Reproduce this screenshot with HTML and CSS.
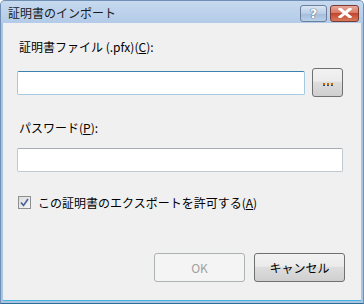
FILE: index.html
```html
<!DOCTYPE html>
<html lang="ja">
<head>
    <meta charset="UTF-8">
    <title>証明書のインポート</title>
    <link rel="stylesheet" href="styles.css">
</head>
<body>
    <div class="window">
        <div class="titlebar">
            <span class="title">証明書のインポート</span>
            <div class="caption-buttons">
                <button class="cap-btn help">?</button>
                <button class="cap-btn close">
                    <svg width="14" height="10" viewBox="0 0 14 10">
                        <path d="M2 1 L12 9 M12 1 L2 9" stroke="#fff" stroke-width="3" stroke-linecap="square"/>
                    </svg>
                </button>
            </div>
        </div>
        <div class="content">
            <label class="field-label" for="pfx">証明書ファイル (.pfx)(<u>C</u>):</label>
            <div class="file-row">
                <input type="text" id="pfx" class="text-input focused">
                <button class="browse-btn"><span class="dots"><i></i><i></i><i></i></span></button>
            </div>
            <label class="field-label pw-label" for="pw">パスワード(<u>P</u>):</label>
            <input type="password" id="pw" class="text-input">
            <label class="check-row">
                <span class="checkbox">
                    <svg width="9" height="9" viewBox="0 0 9 9">
                        <path d="M1 4.5 L3.5 7.5 L8 1" fill="none" stroke="#4a5e9a" stroke-width="1.6"/>
                    </svg>
                </span>
                <span>この証明書のエクスポートを許可する(<u>A</u>)</span>
            </label>
            <div class="actions">
                <button class="btn disabled">OK</button>
                <button class="btn">キャンセル</button>
            </div>
        </div>
    </div>
</body>
</html>
```

FILE: styles.css
```css
body {
    margin: 0;
    font-family: "Noto Sans CJK JP", "Noto Sans", sans-serif;
    font-size: 12px;
    color: #000;
}

.window {
    width: 364px;
    height: 304px;
    box-sizing: border-box;
    display: flex;
    flex-direction: column;
    background: #a9c4e2;
    border-left: 1px solid #6f8fb5;
    border-right: 1px solid #6f8fb5;
    border-top: 1px solid #6f8fb5;
    border-bottom: 1px solid #2e6e96;
    border-radius: 5px 5px 0 0;
    overflow: hidden;
}

.titlebar {
    height: 22px;
    display: flex;
    align-items: center;
    justify-content: space-between;
    padding: 0 4px 0 7px;
    background: linear-gradient(to bottom, #c6d9ef, #b3cbe8);
}

.title {
    font-size: 12px;
    color: #1a1a1a;
    padding-top: 1px;
}

.caption-buttons {
    display: flex;
    gap: 3px;
    padding-top: 2px;
}

.cap-btn {
    height: 17px;
    border-radius: 3px;
    padding: 0;
    display: flex;
    align-items: center;
    justify-content: center;
    font-family: "DejaVu Sans", sans-serif;
}

.cap-btn.help {
    width: 27px;
    border: 1px solid #6d7f9a;
    background: linear-gradient(to bottom, #d9e6f4 0%, #b8cde5 50%, #a3bcda 51%, #b9d0ea 100%);
    color: #fff;
    font-size: 13px;
    font-weight: bold;
    text-shadow: 0 0 1px #3d4f6a, 0 0 1px #3d4f6a;
}

.cap-btn.close {
    width: 29px;
    border: 1px solid #7b3a30;
    background: linear-gradient(to bottom, #e9a99c 0%, #d67b67 45%, #c4452f 50%, #d87a5b 100%);
}

.content {
    flex: 1;
    background: #f0f0f0;
    margin: 0 2px 2px 2px;
    border-bottom: 1px solid #41b5e0;
    padding: 16px 18px 0 14px;
    display: flex;
    flex-direction: column;
}

.field-label {
    display: block;
    padding-left: 2px;
    height: 16px;
    line-height: 16px;
}

.field-label u,
.check-row u {
    text-decoration-thickness: 1px;
    text-underline-offset: 1px;
}

.file-row {
    display: flex;
    align-items: center;
    gap: 7px;
    margin-top: 13px;
}

.text-input {
    height: 24px;
    box-sizing: border-box;
    border: 1px solid #c0c8d0;
    border-top-color: #a8acb3;
    border-radius: 2px;
    background: #fff;
    padding: 0 4px;
    font-size: 12px;
    outline: none;
}

.file-row .text-input {
    width: 290px;
}

.text-input.focused {
    border-color: #a6c9e2;
    border-top-color: #3c7fb1;
}

.browse-btn {
    width: 31px;
    height: 29px;
    box-sizing: border-box;
    border: 1px solid #707070;
    border-radius: 3px;
    padding: 0;
    background: linear-gradient(to bottom, #f2f2f2 0%, #ebebeb 45%, #dddddd 50%, #cfcfcf 100%);
    display: flex;
    align-items: center;
    justify-content: center;
}

.dots {
    display: flex;
    gap: 2px;
    padding-top: 3px;
}

.dots i {
    width: 2px;
    height: 2px;
    background: #c76b00;
    border-bottom: 1px solid #2a4a8a;
}

.pw-label {
    margin-top: 23px;
}

#pw {
    width: 326px;
    margin-top: 12px;
}

.check-row {
    display: flex;
    align-items: center;
    gap: 7px;
    margin-top: 23px;
    padding-left: 1px;
    height: 14px;
}

.checkbox {
    width: 13px;
    height: 13px;
    box-sizing: border-box;
    border: 1px solid #8e8f8f;
    background: linear-gradient(to bottom right, #dcdcdc, #f6f6f6);
    display: flex;
    align-items: center;
    justify-content: center;
}

.actions {
    display: flex;
    justify-content: flex-end;
    gap: 9px;
    margin-top: 44px;
    margin-right: -2px;
}

.btn {
    width: 91px;
    height: 29px;
    box-sizing: border-box;
    border: 1px solid #707070;
    border-radius: 3px;
    background: linear-gradient(to bottom, #f2f2f2 0%, #ebebeb 45%, #dddddd 50%, #cfcfcf 100%);
    font-family: "Noto Sans CJK JP", "Noto Sans", sans-serif;
    font-size: 12px;
    color: #000;
    padding: 0;
}

.btn.disabled {
    border-color: #adb2b5;
    background: #f4f4f4;
    color: #a0a0a0;
}
```
